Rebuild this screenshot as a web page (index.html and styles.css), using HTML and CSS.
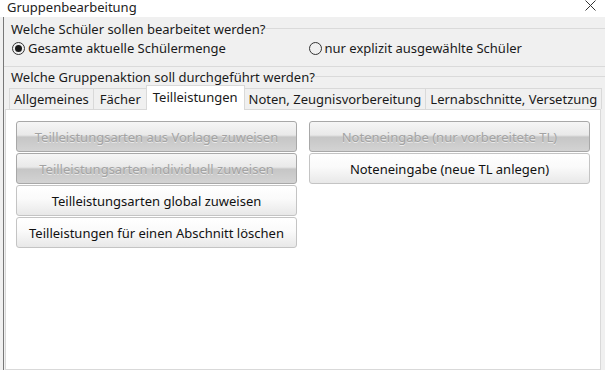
FILE: index.html
```html
<!doctype html>
<html lang="de">
<head>
    <meta charset="UTF-8">
    <title>Gruppenbearbeitung</title>
    <link rel="stylesheet" href="styles.css">
</head>
<body>
<div class="window">
    <div class="titlebar">
        <span class="title">Gruppenbearbeitung</span>
        <svg class="close" width="11" height="11" viewBox="0 0 11 11">
            <path d="M0.5 0.5 L10.5 10.5 M10.5 0.5 L0.5 10.5" stroke="#333" stroke-width="1" fill="none"/>
        </svg>
    </div>

    <div class="frame">
        <div class="caption caption-first">
            <span>Welche Schüler sollen bearbeitet werden?</span>
            <span class="rule"></span>
        </div>

        <div class="radios">
            <label class="radio radio-checked"><span class="radio_dot"></span>Gesamte aktuelle Schülermenge</label>
            <label class="radio"><span class="radio_dot"></span>nur explizit ausgewählte Schüler</label>
        </div>

        <div class="divider"></div>

        <div class="caption caption-second">
            <span>Welche Gruppenaktion soll durchgeführt werden?</span>
            <span class="rule"></span>
        </div>

        <div class="tabs">
            <div class="tab">Allgemeines</div>
            <div class="tab tab-wide">Fächer</div>
            <div class="tab tab-active">Teilleistungen</div>
            <div class="tab">Noten, Zeugnisvorbereitung</div>
            <div class="tab">Lernabschnitte, Versetzung</div>
        </div>

        <div class="pane">
            <div class="col">
                <button class="btn" disabled>Teilleistungsarten aus Vorlage zuweisen</button>
                <button class="btn" disabled>Teilleistungsarten individuell zuweisen</button>
                <button class="btn">Teilleistungsarten global zuweisen</button>
                <button class="btn">Teilleistungen für einen Abschnitt löschen</button>
            </div>
            <div class="col">
                <button class="btn" disabled>Noteneingabe (nur vorbereitete TL)</button>
                <button class="btn">Noteneingabe (neue TL anlegen)</button>
            </div>
        </div>
    </div>
</div>
</body>
</html>
```

FILE: styles.css
```css
html, body {
    margin: 0;
    padding: 0;
}

body {
    background: #f0f0f0;
    font-family: "Noto Sans", "Open Sans", sans-serif;
    font-size: 13px;
    color: #1a1a1a;
    overflow: hidden;
}

.window {
    width: 605px;
    height: 370px;
    display: flex;
    flex-direction: column;
}

.titlebar {
    height: 17px;
    flex: none;
    background: #fff;
    display: flex;
    justify-content: space-between;
    align-items: flex-start;
}

.title {
    margin: 0 0 0 7px;
    line-height: 14px;
    color: #222;
}

.close {
    margin: 0 9px 0 0;
}

.frame {
    flex: 1;
    display: flex;
    flex-direction: column;
    border-left: 1px solid #777;
    margin-left: 3px;
    background: #f0f0f0;
}

.caption {
    display: flex;
    align-items: center;
    height: 18px;
    padding-left: 7px;
}

.caption-first {
    margin-top: 3px;
}

.caption-second {
    margin-top: 1px;
}

.caption .rule {
    flex: 1;
    height: 1px;
    background: #dadada;
    margin-top: -2px;
}

.radios {
    display: flex;
    height: 20px;
    align-items: center;
    padding-left: 8px;
}

.radio {
    display: flex;
    align-items: center;
    width: 298px;
}

.radio_dot {
    width: 13px;
    height: 13px;
    border: 1px solid #333;
    border-radius: 50%;
    margin-right: 3px;
    box-sizing: border-box;
    display: flex;
    align-items: center;
    justify-content: center;
}

.radio-checked .radio_dot::after {
    content: "";
    width: 7px;
    height: 7px;
    border-radius: 50%;
    background: #1a1a1a;
}

.divider {
    height: 1px;
    background: #dadada;
    margin-top: 8px;
}

.tabs {
    display: flex;
    align-items: flex-end;
    height: 23px;
    padding-left: 5px;
}

.tab {
    height: 21px;
    line-height: 20px;
    padding: 0 4px;
    border: 1px solid #d9d9d9;
    border-bottom: none;
    margin-right: -1px;
    box-sizing: border-box;
    background: #f0f0f0;
}

.tab-wide {
    padding: 0 5px 0 6px;
}

.tab-active {
    height: 25px;
    line-height: 22px;
    background: #fff;
    position: relative;
    z-index: 1;
    margin-bottom: -1px;
    padding: 0 6px;
}

.pane {
    flex: 1;
    background: #fff;
    border: 1px solid #d9d9d9;
    margin: 0 4px 0 1px;
    padding: 11px 8px 0 10px;
    display: flex;
    gap: 12px;
    align-items: flex-start;
}

.col {
    display: flex;
    flex-direction: column;
    gap: 1px;
    width: 281px;
}

.btn {
    height: 31px;
    font: inherit;
    color: #111;
    border: 1px solid #c4c4c4;
    border-radius: 3px;
    background: linear-gradient(#ffffff, #fafafa 45%, #e8e8e8);
    padding: 0;
}

.btn:disabled {
    color: #a3a3a3;
    border-color: #a8a8a8;
    background: linear-gradient(#f6f6f6, #e9e9e9 45%, #c6c6c6 52%, #d3d3d3);
    text-shadow: 0 1px 0 rgba(255, 255, 255, 0.6);
}
```
